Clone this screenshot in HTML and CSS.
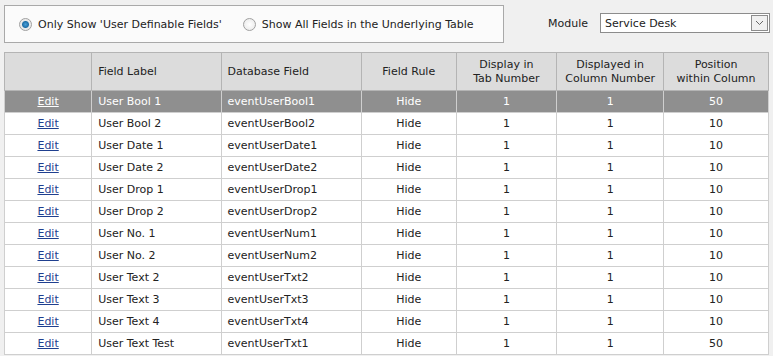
FILE: index.html
```html
<!DOCTYPE html>
<html lang="en">
<head>
    <meta charset="UTF-8">
    <title>User Definable Fields</title>
    <link rel="stylesheet" href="styles.css">
</head>
<body>
    <div class="toolbar">
        <div class="filter-box">
            <label class="radio"><span class="dot checked"></span>Only Show 'User Definable Fields'</label>
            <label class="radio"><span class="dot"></span>Show All Fields in the Underlying Table</label>
        </div>
        <div class="module">
            <span class="module-label">Module</span>
            <div class="select">
                <span>Service Desk</span>
                <span class="select-btn">
                    <svg width="9" height="6" viewBox="0 0 9 6"><path d="M1 1 L4.5 4.5 L8 1" fill="none" stroke="#666" stroke-width="1"/></svg>
                </span>
            </div>
        </div>
    </div>

    <table class="fields">
        <tr>
            <th class="c-edit"></th>
            <th class="c-label left">Field Label</th>
            <th class="c-db left">Database Field</th>
            <th class="c-rule">Field Rule</th>
            <th class="c-tab">Display in<br>Tab Number</th>
            <th class="c-col">Displayed in<br>Column Number</th>
            <th class="c-pos">Position<br>within Column</th>
        </tr>
        <tr class="selected">
            <td><a href="#">Edit</a></td><td class="left">User Bool 1</td><td class="left">eventUserBool1</td><td>Hide</td><td>1</td><td>1</td><td>50</td>
        </tr>
        <tr>
            <td><a href="#">Edit</a></td><td class="left">User Bool 2</td><td class="left">eventUserBool2</td><td>Hide</td><td>1</td><td>1</td><td>10</td>
        </tr>
        <tr>
            <td><a href="#">Edit</a></td><td class="left">User Date 1</td><td class="left">eventUserDate1</td><td>Hide</td><td>1</td><td>1</td><td>10</td>
        </tr>
        <tr>
            <td><a href="#">Edit</a></td><td class="left">User Date 2</td><td class="left">eventUserDate2</td><td>Hide</td><td>1</td><td>1</td><td>10</td>
        </tr>
        <tr>
            <td><a href="#">Edit</a></td><td class="left">User Drop 1</td><td class="left">eventUserDrop1</td><td>Hide</td><td>1</td><td>1</td><td>10</td>
        </tr>
        <tr>
            <td><a href="#">Edit</a></td><td class="left">User Drop 2</td><td class="left">eventUserDrop2</td><td>Hide</td><td>1</td><td>1</td><td>10</td>
        </tr>
        <tr>
            <td><a href="#">Edit</a></td><td class="left">User No. 1</td><td class="left">eventUserNum1</td><td>Hide</td><td>1</td><td>1</td><td>10</td>
        </tr>
        <tr>
            <td><a href="#">Edit</a></td><td class="left">User No. 2</td><td class="left">eventUserNum2</td><td>Hide</td><td>1</td><td>1</td><td>10</td>
        </tr>
        <tr>
            <td><a href="#">Edit</a></td><td class="left">User Text 2</td><td class="left">eventUserTxt2</td><td>Hide</td><td>1</td><td>1</td><td>10</td>
        </tr>
        <tr>
            <td><a href="#">Edit</a></td><td class="left">User Text 3</td><td class="left">eventUserTxt3</td><td>Hide</td><td>1</td><td>1</td><td>10</td>
        </tr>
        <tr>
            <td><a href="#">Edit</a></td><td class="left">User Text 4</td><td class="left">eventUserTxt4</td><td>Hide</td><td>1</td><td>1</td><td>10</td>
        </tr>
        <tr>
            <td><a href="#">Edit</a></td><td class="left">User Text Test</td><td class="left">eventUserTxt1</td><td>Hide</td><td>1</td><td>1</td><td>50</td>
        </tr>
    </table>
</body>
</html>
```

FILE: styles.css
```css
body {
    margin: 0;
    background-color: #f0f0f0;
    font-family: 'DejaVu Sans', Verdana, sans-serif;
    font-size: 11px;
    color: #222;
}
.toolbar {
    display: flex;
    align-items: flex-start;
    padding: 5px 0 0 4px;
}
.filter-box {
    box-sizing: border-box;
    width: 500px;
    height: 38px;
    border: 1px solid #a9a9a9;
    background-color: #fbfbfb;
    display: flex;
    align-items: center;
    gap: 21px;
    padding-left: 14px;
}
.radio {
    display: flex;
    align-items: center;
    gap: 6px;
}
.dot {
    box-sizing: border-box;
    width: 13px;
    height: 13px;
    border-radius: 50%;
    border: 1px solid #a0a0a0;
    background: radial-gradient(circle, #fff 0, #e6e6e6 100%);
}
.dot.checked {
    background: radial-gradient(circle, #4aa0d8 0, #1f6fa8 3px, #e8e8e8 4px, #f4f4f4 100%);
}
.module {
    display: flex;
    align-items: center;
    margin-left: 44px;
    margin-top: 8px;
}
.module-label {
    margin-right: 12px;
}
.select {
    box-sizing: border-box;
    width: 170px;
    height: 20px;
    border: 1px solid #8c8c8c;
    background-color: #fff;
    display: flex;
    align-items: center;
    justify-content: space-between;
    padding-left: 4px;
}
.select-btn {
    box-sizing: border-box;
    width: 17px;
    height: 16px;
    margin-right: 1px;
    border: 1px solid #8c8c8c;
    background-color: #f0f0f0;
    display: flex;
    align-items: center;
    justify-content: center;
}
.fields {
    margin: 9px 0 0 4px;
    width: 765px;
    border-collapse: collapse;
    border: 1px solid #a0a0a0;
    background-color: #fff;
}
.fields th, .fields td {
    border: 1px solid #cfcfcf;
    text-align: center;
    padding: 0 6px;
    font-weight: normal;
    white-space: nowrap;
}
.fields th {
    height: 37px;
    background-color: #dcdcdc;
    border-color: #b4b4b4;
    line-height: 14px;
}
.fields td {
    height: 21px;
}
.fields .left {
    text-align: left;
}
.c-edit { width: 75px; }
.c-label { width: 117px; }
.c-db { width: 128px; }
.c-rule { width: 82px; }
.c-tab { width: 88px; }
.c-col { width: 94px; }
.c-pos { width: 92px; }
.fields a {
    color: #1f3f8f;
    text-decoration: underline;
}
.fields tr.selected td {
    background-color: #8f8f8f;
    color: #fff;
}
.fields tr.selected a {
    color: #fff;
}
```
